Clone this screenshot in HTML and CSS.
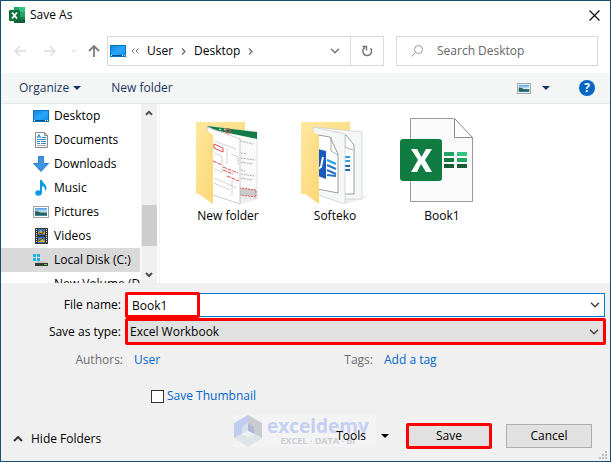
FILE: index.html
```html
<!DOCTYPE html>
<html lang="en">
<head>
<meta charset="utf-8">
<title>Save As</title>
<link rel="stylesheet" href="styles.css">
</head>
<body>
<svg class="defs" width="0" height="0" aria-hidden="true">
  <defs>
    <linearGradient id="blue" x1="0" y1="0" x2="1" y2="1"><stop offset="0" stop-color="#1286dd"/><stop offset=".5" stop-color="#26a6fb"/><stop offset="1" stop-color="#168fea"/></linearGradient>
    <linearGradient id="folder" x1="0" y1="0" x2="1" y2="1"><stop offset="0" stop-color="#ffe89f"/><stop offset="1" stop-color="#fbd775"/></linearGradient>
    <linearGradient id="sky" x1="0" y1="0" x2="0" y2="1"><stop offset="0" stop-color="#4d9be0"/><stop offset=".5" stop-color="#d5ebf8"/><stop offset=".6" stop-color="#3d7466"/><stop offset="1" stop-color="#4586b5"/></linearGradient>
    <symbol id="desktop" viewBox="0 0 16 16"><rect x=".5" y="2.5" width="15" height="11" fill="url(#blue)" stroke="#0870bd"/><path d="M1 12.5h14" stroke="#075293"/><path d="M1 12.5h1M12 12.5h1M14 12.5h1" stroke="#fff"/></symbol>
    <symbol id="picture" viewBox="0 0 16 12"><rect x=".5" y=".5" width="15" height="11" fill="#fff" stroke="#9aa0a5"/><rect x="2" y="2" width="12" height="8" fill="url(#sky)"/><path d="M2 5q4 0 6 2l6 1v1H2z" fill="#28625c"/></symbol>
    <symbol id="down" viewBox="0 0 10 6"><path d="M1 .8l4 4 4-4" fill="none" stroke="currentColor" stroke-width="1.5"/></symbol>
  </defs>
</svg>
<main class="window">
  <header class="titlebar">
    <svg class="icon" viewBox="0 0 16 16" aria-hidden="true"><path d="M5 0h11v16H5z" fill="#21a366"/><path d="M10 0h6v5h-6z" fill="#33c481"/><path d="M5 5h6v6H5z" fill="#107c41"/><path d="M5 11h11v5H5z" fill="#185c37"/><path d="M11 10h5v3h-5z" fill="#107c41"/><rect y="3" width="11" height="11" rx="1" fill="#0f703b"/><path d="M3 5.500l5 6M8 5.500l-5 6" stroke="#fff" stroke-width="1.800"/></svg>
    <h1>Save As</h1>
    <button class="close" type="button" aria-label="Close"><svg width="11" height="11" viewBox="0 0 11 11"><path d="M.5.5l10 10M10.500.5l-10 10" stroke="#000" stroke-width="1.100"/></svg></button>
  </header>

  <nav class="nav" aria-label="Location">
    <div class="history">
      <button type="button" aria-label="Back" disabled><svg width="12" height="12" viewBox="0 0 12 12"><path d="M12 6H1M6 1L1 6l5 5" fill="none" stroke="#dcdcdc" stroke-width="1.500"/></svg></button>
      <button type="button" aria-label="Forward" disabled><svg width="12" height="12" viewBox="0 0 12 12"><path d="M0 6h11M6 1l5 5-5 5" fill="none" stroke="#dcdcdc" stroke-width="1.500"/></svg></button>
      <button type="button" class="recent" aria-label="Recent locations" disabled><svg width="6" height="4" viewBox="0 0 10 6"><use href="#down"/></svg></button>
      <button type="button" aria-label="Up"><svg width="12" height="12" viewBox="0 0 12 12"><path d="M6 12V1M1 6l5-5 5 5" fill="none" stroke="#7b7b7b" stroke-width="1.800"/></svg></button>
    </div>
    <div class="address">
      <svg class="icon" aria-hidden="true"><use href="#desktop"/></svg>
      <svg class="back-chevrons" width="8" height="6" viewBox="0 0 8 6" aria-hidden="true"><path d="M3.500.5L1 3l2.500 2.500M7.500.5L5 3l2.500 2.500" fill="none" stroke="#777"/></svg>
      <a href="#user">User</a>
      <svg class="crumb" width="5" height="7" viewBox="0 0 5 7" aria-hidden="true"><path d="M1 .5l3 3-3 3" fill="none" stroke="#777" stroke-width="1.500"/></svg>
      <a href="#desktop-folder">Desktop</a>
      <svg class="crumb" width="5" height="7" viewBox="0 0 5 7" aria-hidden="true"><path d="M1 .5l3 3-3 3" fill="none" stroke="#777" stroke-width="1.500"/></svg>
      <button class="history-drop" type="button" aria-label="Previous locations"><svg width="10" height="6"><use href="#down"/></svg></button>
      <button class="refresh" type="button" aria-label="Refresh"><svg width="12" height="12" viewBox="0 0 12 12"><path d="M9.500 3.300A4.400 4.400 0 1 1 3.800 2.500M1.500 1.500h4v4" fill="none" stroke="#777" stroke-width="1.500"/></svg></button>
    </div>
    <label class="search">
      <svg width="12" height="12" viewBox="0 0 12 12" aria-hidden="true"><circle cx="7.500" cy="4.500" r="4" fill="none" stroke="#999"/><path d="M4.500 7.500L.5 11.500" stroke="#999"/></svg>
      <input type="search" placeholder="Search Desktop" aria-label="Search Desktop">
    </label>
  </nav>

  <div class="toolbar">
    <button class="organize" type="button">Organize <i class="triangle"></i></button>
    <button type="button">New folder</button>
    <button class="view" type="button" aria-label="Change view"><svg width="14" height="11" viewBox="0 0 16 12" preserveAspectRatio="none"><use href="#picture"/></svg><i class="triangle"></i></button>
    <button class="help" type="button" aria-label="Help">?</button>
  </div>

  <section class="browser">
    <ul class="tree">
      <li><svg class="icon" aria-hidden="true"><use href="#desktop"/></svg>Desktop</li>
      <li><svg class="icon" viewBox="0 0 16 16" aria-hidden="true"><path d="M2.500.5h9l3 3v12h-12z" fill="#fff" stroke="#8a8a8a"/><path d="M11.500.5v3h3" fill="none" stroke="#8a8a8a"/><path d="M4 6l2-3.500L7.500 6M4.500 5h3M9 5.500h4M4 7.500h9M4 9.500h3M4 11.500h3" fill="none" stroke="#2c8bd0"/><path d="M8 9.500h5M8 11.500h5" stroke="#3e8bb3"/><path d="M4 13.500h9" stroke="#aaa"/></svg>Documents</li>
      <li><svg class="icon" viewBox="0 0 16 16" aria-hidden="true"><path d="M5.500.5h5v7h5L8 15.500.5 7.500h5z" fill="#3c94e2" stroke="#2f82cc"/></svg>Downloads</li>
      <li><svg class="icon" viewBox="0 0 16 16" aria-hidden="true"><ellipse cx="5.500" cy="13" rx="3.300" ry="2.700" fill="#0a98e8"/><path d="M7 0h2c0 3 5 4 4.500 9l-1.500 2c.5-3-1-4.500-3-5v7H7z" fill="#0a98e8"/></svg>Music</li>
      <li><svg class="icon" viewBox="0 -2 16 16" aria-hidden="true"><use href="#picture" width="16" height="12"/></svg>Pictures</li>
      <li><svg class="icon" viewBox="0 0 16 16" aria-hidden="true"><path d="M2 0h13v16H2z" fill="#353535"/><path d="M3.500 1v14M13.500 1v14" stroke="#ddd" stroke-dasharray="1 1"/><path d="M5 1h7v6H5zM5 9h7v6H5z" fill="#2d78c6"/><path d="M5 5l3-3 1 2 3-1v3H5zM5 13l3-3 4 3v1H5z" fill="#d9a72d"/><path d="M6 5l3 1 2-3M6 13l4-3" stroke="#493417" fill="none"/></svg>Videos</li>
      <li class="selected"><svg class="icon" viewBox="0 0 16 16" aria-hidden="true"><path d="M0 2h3v3H0zM4 2h3v3H4zM0 6h3v3H0zM4 6h3v3H4z" fill="#16b3ee"/><path d="M4 9h9l2 2H2z" fill="#c9c9c9"/><path d="M2 11h13v3H2z" fill="#363636"/><path d="M11 12.500h3" stroke="#4fdc48"/></svg>Local Disk (C:)</li>
      <li><span class="icon"></span>New Volume (D:)</li>
    </ul>
    <div class="scrollbar" aria-hidden="true">
      <svg width="8" height="6" viewBox="0 0 8 6"><path d="M1 4.800l3-3 3 3" fill="none" stroke="#505050" stroke-width="2"/></svg>
      <span class="thumb"></span>
      <svg width="8" height="6" viewBox="0 0 8 6"><path d="M1 1l3 3 3-3" fill="none" stroke="#505050" stroke-width="2"/></svg>
    </div>
    <div class="files">
      <figure>
        <svg width="64" height="86" viewBox="0 0 64 86" aria-hidden="true">
          <path d="M44 80l20-2-5 4-15 4z" fill="#eee"/><path d="M0 4h49v72H0z" fill="url(#folder)"/>
          <path d="M11 8l50 6v67l-22-2z" fill="#fafafa" stroke="#c4c4c4" stroke-width=".5"/><path d="M11 8l50 6v7L18 12z" fill="#137b47"/><path d="M23 11l2 1M28 11l2 1" stroke="#fff"/><path d="M30 11h4v4h-4z" fill="none" stroke="#e5484d"/>
          <path d="M44 23l13 3M45 35l5 1M45 40l14 2M45 44l12 2M45 52l4 1M45 56l13 2M45 60l12 2" stroke="#aaa" stroke-dasharray="2 1"/>
          <path d="M43 70l17 2v7l-17-2z" fill="#ccc" stroke="#e04d50" stroke-dasharray="2 1"/>
          <path d="M11 9l33 12v65L14 76z" fill="#fff" stroke="#b6b6b6" stroke-width=".7"/><path d="M18 26l9 4v4l-9-4z" fill="none" stroke="#e04d50"/><path d="M17 43l9 4M27 49l15 6M27 52l10 4M31 58l12 5" stroke="#e04d50" stroke-dasharray="4 1"/><path d="M18 23l22 8M18 35l8 3v16l-8-3M31 30v16M35 36l7 3v8M18 60l23 10M18 65l16 7M36 62v15" fill="none" stroke="#c0c0c0" stroke-width=".7"/>
          <path d="M0 4l17 13v69L0 74z" fill="url(#folder)"/>
        </svg>
        <figcaption>New folder</figcaption>
      </figure>
      <figure>
        <svg width="68" height="86" viewBox="0 0 68 86" aria-hidden="true">
          <path d="M44 81l24-4-6 4-18 5z" fill="#eee"/><path d="M0 4h49v72H0z" fill="url(#folder)"/>
          <path d="M13 9l48 5v67H42z" fill="#f5f7f7" stroke="#c9cdcd" stroke-width=".7"/><path d="M34 17h11l8 10v49H42z" fill="#fff" stroke="#777" stroke-width=".7"/><path d="M44 17v12l8 3" fill="none" stroke="#888" stroke-width=".7"/><path d="M43 39h6M43 43h6" stroke="#2aa0e4" stroke-width="2"/><path d="M43 48h6M43 52h6" stroke="#1b63b0" stroke-width="2"/>
          <path d="M12 9l32 7v70L17 77z" fill="#f5f7f7" stroke="#c9cdcd" stroke-width=".7"/><path d="M17 17l12 2 8 17v39l-20-4z" fill="#fff" stroke="#777" stroke-width=".7"/><path d="M30 19v14l7 4" fill="none" stroke="#888" stroke-width=".7"/><path d="M26 42l9 4" stroke="#2aa0e4" stroke-width="2"/><path d="M26 47l9 4M26 52l9 4M26 57l9 1" stroke="#2b75c4" stroke-width="2"/><path d="M17 31l8 2v28l-8-3z" fill="#185abd"/><path d="M17 51l3-2 2-10" fill="none" stroke="#fff" stroke-width="2"/>
          <path d="M0 4l18 14v68L0 73z" fill="url(#folder)"/>
        </svg>
        <figcaption>Softeko</figcaption>
      </figure>
      <figure>
        <svg width="84" height="86" viewBox="0 0 84 86" aria-hidden="true"><path d="M10.500.5h43l19 19v64h-62z" fill="#fafafa" stroke="#999"/><path d="M54.500.5v19h18z" fill="#fff" stroke="#8a8a8a"/><rect y="21" width="42" height="42" rx="3" fill="#107c41"/><path d="M11 31h6l4.500 8 4.500-8h6l-7 11 7 12h-6l-5-8-4 8h-6l7-12z" fill="#fff"/><path d="M44 36h10M57 42h10" stroke-width="4" stroke="#21a366"/><path d="M57 36h10" stroke-width="4" stroke="#33c481"/><path d="M44 42h10" stroke-width="4" stroke="#107c41"/><path d="M44 48h10M57 48h10" stroke-width="4" stroke="#185c37"/></svg>
        <figcaption>Book1</figcaption>
      </figure>
    </div>
  </section>

  <form class="details">
    <div class="field">
      <label for="filename">File name:</label>
      <div class="combo"><input id="filename" type="text" value="Book1"><svg width="10" height="6" aria-hidden="true"><use href="#down"/></svg><span class="mark"></span></div>
    </div>
    <div class="field">
      <label for="filetype">Save as type:</label>
      <div class="combo type"><select id="filetype"><option>Excel Workbook</option></select><svg width="10" height="6" aria-hidden="true"><use href="#down"/></svg></div>
    </div>
    <div class="meta">
      <span class="key">Authors:</span><a href="#author">User</a>
      <span class="key">Tags:</span><a href="#tag">Add a tag</a>
    </div>
    <label class="thumbnail"><input type="checkbox">Save Thumbnail</label>
    <footer class="actions">
      <button class="hide" type="button"><svg width="10" height="6" viewBox="0 0 10 6" aria-hidden="true"><path d="M1 5l4-4 4 4" fill="none" stroke="#333" stroke-width="2"/></svg>Hide Folders</button>
      <div class="tools-area">
        <div class="watermark" aria-hidden="true">
          <svg width="28" height="32" viewBox="0 0 28 32"><path d="M14 0L0 8v15l8-4v-7l6-4z" fill="#c1cdf0"/><path d="M14 0l14 8v15l-8-4v-7l-6-4z" fill="#c9ccd1"/><path d="M0 23l14 9 14-9-8-4-6 3-6-3z" fill="#dde5e8"/><path d="M8 12l6-4v8l-6 3z" fill="#d8e0ed"/><path d="M14 8l6 4v7l-6-3z" fill="#aeb8d6"/><path d="M8 19l6-3 6 3-6 3z" fill="#eef1f4"/></svg>
          <div><strong>exceldemy</strong><small>EXCEL · DATA · BI</small></div>
        </div>
        <button class="tools" type="button">Tools<i class="triangle"></i></button>
      </div>
      <button class="command save" type="submit">Save</button>
      <button class="command" type="button">Cancel</button>
    </footer>
    <svg class="grip" width="8" height="8" viewBox="0 0 8 8" aria-hidden="true"><path d="M6 0h2v2H6zM3 3h2v2H3zM6 3h2v2H6zM0 6h2v2H0zM3 6h2v2H3zM6 6h2v2H6z" fill="#bcbcbc"/></svg>
  </form>
</main>
</body>
</html>
```
FILE: styles.css
```css
* { box-sizing: border-box; }
body { margin: 0; font: 12px/16px "Open Sans", "Noto Sans", sans-serif; color: #000; }
button, input, select { font: inherit; color: inherit; }
button { padding: 0; border: 0; background: none; }
a { color: #0066cc; text-decoration: none; }
svg { display: block; flex: none; }
.defs { position: absolute; }
.icon { width: 16px; height: 16px; flex: none; }

.window {
  height: 100vh;
  display: flex;
  flex-direction: column;
  border: 1px solid #174f70;
  background: #fff;
}

.titlebar { display: flex; align-items: center; gap: 5px; height: 28px; padding: 0 10px 0 8px; flex: none; }
.titlebar h1 { margin: 0; font: inherit; }
.close { margin-left: auto; }

.nav { display: flex; gap: 12px; padding: 7px 12px 7px 13px; flex: none; }
.history { display: flex; align-items: center; gap: 18px; width: 93px; margin-right: -12px; }
.history .recent { margin: 0 -7px 0 -3px; color: #cfcfcf; }
.address, .search { display: flex; align-items: center; height: 30px; border: 1px solid #d9d9d9; }
.address { flex: 1 1 277px; padding-left: 2px; }
.address a { color: #000; }
.back-chevrons { margin: 0 8px 0 5px; }
.crumb { margin: 0 8px; }
.history-drop { margin-left: auto; margin-right: 10px; color: #777; }
.refresh { display: flex; align-items: center; justify-content: center; width: 33px; height: 28px; border-left: 1px solid #d9d9d9; }
.search { flex: 1 1 202px; min-width: 0; padding-left: 14px; gap: 14px; }
.search input { flex: 1; min-width: 0; border: 0; padding: 0; outline: 0; background: none; }
.search input::placeholder { color: #666; opacity: 1; }

.toolbar {
  display: flex;
  align-items: center;
  flex: none;
  height: 31px;
  padding: 0 15px 0 18px;
  border-bottom: 1px solid #e8e8e8;
  background: #f4f6f6;
  color: #1b345f;
}
.triangle { display: inline-block; border: 4px solid transparent; border-top-color: currentColor; border-bottom: 0; }
.organize { display: flex; align-items: center; gap: 4px; margin-right: 30px; }
.view { display: flex; align-items: center; gap: 11px; margin-left: auto; margin-right: 29px; }
.help { width: 16px; height: 16px; border-radius: 50%; background: #0067c5; color: #fff; font-weight: 700; }

.browser { flex: 1; min-height: 0; display: flex; overflow: hidden; }
.tree { width: 139px; flex: none; margin: 0; padding: 0; list-style: none; }
.tree li { display: flex; align-items: center; gap: 5px; height: 24px; padding-left: 32px; white-space: nowrap; overflow: hidden; }
.tree .selected { background: #d9d9d9; }
.scrollbar {
  display: flex;
  flex-direction: column;
  align-items: center;
  width: 16px;
  margin-left: 1px;
  padding: 6px 0 5px;
  background: #f0f0f0;
}
.thumb { width: 15px; height: 41px; margin: auto 0 26px; background: #cdcdcd; }
.files { flex: 1; display: flex; gap: 27px; margin-left: 2px; padding: 14px 0 0 28px; border-left: 1px solid #f3f3f3; }
figure { display: flex; flex-direction: column; align-items: center; gap: 4px; width: 80px; margin: 0; }

.details { position: relative; flex: none; padding: 9px 4px 12px; background: #f0f0f0; }
.field { display: flex; align-items: center; }
.field label { width: 120px; padding-right: 4px; text-align: right; }
.combo { position: relative; flex: 1; display: flex; align-items: center; height: 24px; margin: 1px 1px 1px 0; border: 1px solid #0078d7; background: #fff; color: #444; }
.combo input, .combo select { flex: 1; min-width: 0; height: 100%; padding: 0 0 0 6px; border: 0; outline: 0; background: none; color: #000; appearance: none; }
.combo svg { margin: 0 4px; }
.combo.type { height: 27px; margin: 0; border: 3px solid #f00; border-radius: 2px; background: #e1e1e1; }
.combo.type select { padding-left: 2px; }
.mark { position: absolute; inset: -2px auto -2px -1px; width: 75px; border: 3px solid #f00; border-radius: 2px; pointer-events: none; }

.meta { display: grid; grid-template-columns: 118px 196px 32px 1fr; column-gap: 11px; margin-top: 7px; }
.meta .key { color: #6d6d6d; text-align: right; }
.thumbnail { display: flex; align-items: center; gap: 3px; width: fit-content; margin: 20px 0 0 146px; color: #0066cc; }
.thumbnail input { appearance: none; width: 13px; height: 13px; margin: 0; border: 1px solid #333; background: #fff; }

.actions { display: flex; align-items: center; gap: 14px; margin-top: 19px; padding-right: 14px; }
.hide { display: flex; align-items: center; gap: 8px; margin-left: 8px; margin-top: 6px; }
.tools-area { position: relative; margin-left: auto; margin-right: 3px; }
.tools { position: relative; display: flex; align-items: center; gap: 15px; }
.command { width: 86px; height: 24px; border: 1px solid #adadad; background: #e1e1e1; }
.save { height: 26px; border: 3px solid #f00; border-radius: 2px; }
.watermark { position: absolute; right: 13px; bottom: -3px; display: flex; align-items: center; gap: 5px; width: 142px; height: 32px; background: #f3f3f3; }
.watermark strong { display: block; font: 700 19px/20px "Open Sans", sans-serif; color: #c4cff1; }
.watermark small { display: block; font: 700 9px/10px "Open Sans", sans-serif; color: #cbced3; text-align: center; white-space: nowrap; }
.grip { position: absolute; right: 3px; bottom: 2px; }
```
